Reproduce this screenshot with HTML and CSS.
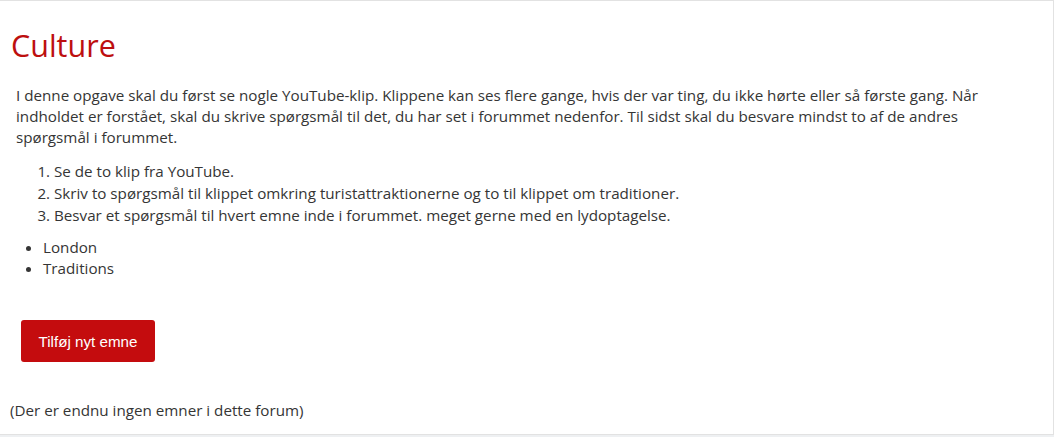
FILE: index.html
```html
<!DOCTYPE html>
<html lang="da">
<head>
<meta charset="utf-8">
<title>Culture</title>
<link rel="stylesheet" href="styles.css">
</head>
<body>
<div class="panel">
  <h2 class="title">Culture</h2>
  <div class="intro">
    <p>I denne opgave skal du først se nogle YouTube-klip. Klippene kan ses flere gange, hvis der var ting, du ikke hørte eller så første gang. Når indholdet er forstået, skal du skrive spørgsmål til det, du har set i forummet nedenfor. Til sidst skal du besvare mindst to af de andres spørgsmål i forummet.</p>
    <ol class="steps">
      <li>Se de to klip fra YouTube.</li>
      <li>Skriv to spørgsmål til klippet omkring turistattraktionerne og to til klippet om traditioner.</li>
      <li>Besvar et spørgsmål til hvert emne inde i forummet. meget gerne med en lydoptagelse.</li>
    </ol>
    <ul class="topics">
      <li>London</li>
      <li>Traditions</li>
    </ul>
  </div>
  <div class="actions">
    <button class="btn" type="button">Tilføj nyt emne</button>
  </div>
  <p class="empty">(Der er endnu ingen emner i dette forum)</p>
</div>
</body>
</html>
```

FILE: styles.css
```css
html, body {
  margin: 0;
  padding: 0;
}
body {
  background: #eef0f2;
  font-family: "Open Sans", "Noto Sans", sans-serif;
  color: #353535;
  height: 437px;
  overflow: hidden;
}
.panel {
  background: #fff;
  border-top: 1px solid #e2e2e2;
  border-right: 1px solid #e2e2e2;
  border-bottom: 1px solid #e2e2e2;
  height: 435px;
  box-sizing: border-box;
  padding-top: 28px;
}
.title {
  margin: 0 0 0 11px;
  font-weight: 400;
  font-size: 30.5px;
  line-height: 33px;
  color: #bd0f0f;
}
.intro {
  padding-left: 16px;
  padding-right: 40px;
  font-size: 15.2px;
}
.intro p {
  margin: 23px 0 0;
  line-height: 21px;
}
.steps {
  margin: 12px 0 0;
  padding-left: 38px;
  line-height: 22px;
}
.topics {
  margin: 11px 0 0;
  padding-left: 27px;
  line-height: 21px;
}
.actions {
  padding: 41px 0 0 21px;
}
.btn {
  display: block;
  background: #c40c0e;
  color: #fff;
  border: 0;
  border-radius: 3px;
  width: 134px;
  height: 42px;
  padding: 0;
  font-family: "Liberation Sans", Arial, sans-serif;
  font-size: 15.2px;
}
.empty {
  margin: 38px 0 0 10px;
  font-size: 15.2px;
  line-height: 21px;
}
```
